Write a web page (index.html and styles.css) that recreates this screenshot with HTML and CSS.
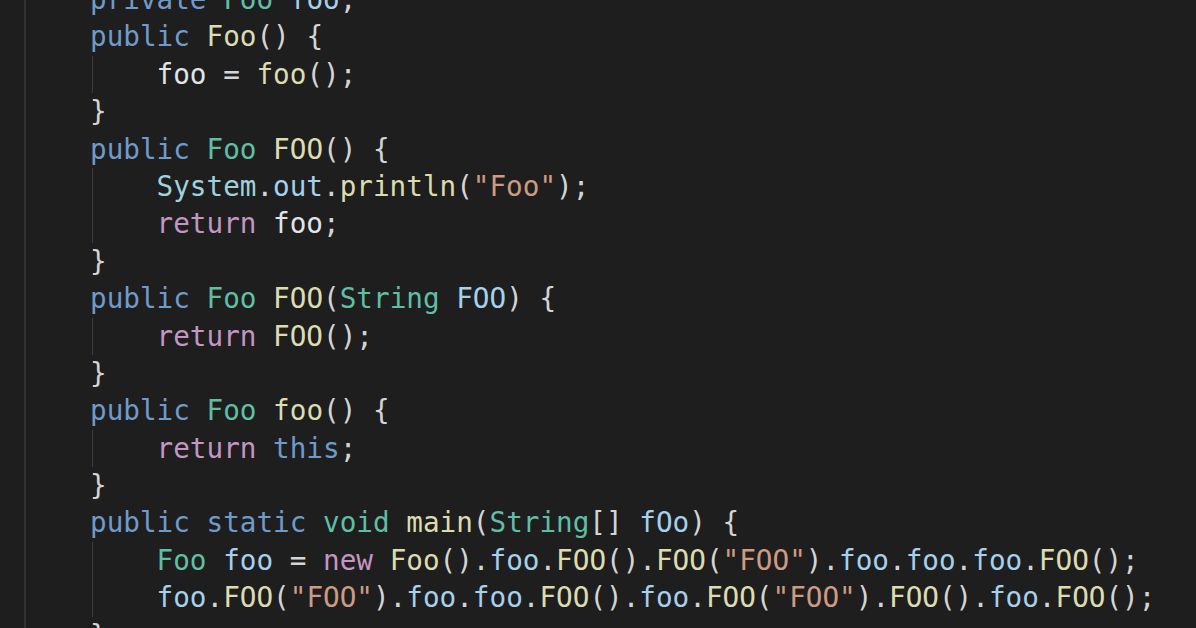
FILE: index.html
```html
<!DOCTYPE html>
<html>
<head>
<meta charset="utf-8">
<link rel="stylesheet" href="styles.css">
</head>
<body>
<div class="editor">
  <div class="rule"></div>
  <div class="code">
    <div class="ln"><span class="kw">private</span> <span class="ty">Foo</span> <span class="var">foo</span>;</div>
    <div class="ln"><span class="kw">public</span> <span class="fn">Foo</span>() {</div>
    <div class="body">
      <div class="ln"><span class="var2">foo</span> = <span class="fn">foo</span>();</div>
    </div>
    <div class="ln">}</div>
    <div class="ln"><span class="kw">public</span> <span class="ty">Foo</span> <span class="fn">FOO</span>() {</div>
    <div class="body">
      <div class="ln"><span class="ty2">System</span>.<span class="var">out</span>.<span class="fn">println</span>(<span class="str">"Foo"</span>);</div>
      <div class="ln"><span class="ctl">return</span> <span class="var2">foo</span>;</div>
    </div>
    <div class="ln">}</div>
    <div class="ln"><span class="kw">public</span> <span class="ty">Foo</span> <span class="fn">FOO</span>(<span class="ty">String</span> <span class="var">FOO</span>) {</div>
    <div class="body">
      <div class="ln"><span class="ctl">return</span> <span class="fn">FOO</span>();</div>
    </div>
    <div class="ln">}</div>
    <div class="ln"><span class="kw">public</span> <span class="ty">Foo</span> <span class="fn">foo</span>() {</div>
    <div class="body">
      <div class="ln"><span class="ctl">return</span> <span class="kw">this</span>;</div>
    </div>
    <div class="ln">}</div>
    <div class="ln"><span class="kw">public</span> <span class="kw">static</span> <span class="ty">void</span> <span class="fn">main</span>(<span class="ty">String</span>[] <span class="var">fOo</span>) {</div>
    <div class="body">
      <div class="ln"><span class="ty">Foo</span> <span class="var">foo</span> = <span class="ctl">new</span> <span class="fn">Foo</span>().<span class="var">foo</span>.<span class="fn">FOO</span>().<span class="fn">FOO</span>(<span class="str">"FOO"</span>).<span class="var">foo</span>.<span class="var">foo</span>.<span class="var">foo</span>.<span class="fn">FOO</span>();</div>
      <div class="ln"><span class="var">foo</span>.<span class="fn">FOO</span>(<span class="str">"FOO"</span>).<span class="var">foo</span>.<span class="var">foo</span>.<span class="fn">FOO</span>().<span class="var">foo</span>.<span class="fn">FOO</span>(<span class="str">"FOO"</span>).<span class="fn">FOO</span>().<span class="var">foo</span>.<span class="fn">FOO</span>();</div>
    </div>
    <div class="ln">}</div>
  </div>
</div>
</body>
</html>
```

FILE: styles.css
```css
html, body {
  margin: 0;
  padding: 0;
  background: #1e1e1e;
  overflow: hidden;
}

.editor {
  display: flex;
  width: 1196px;
  height: 628px;
  overflow: hidden;
  background: #1e1e1e;
}

.rule {
  flex: none;
  width: 2px;
  height: 100%;
  margin-left: 24px;
  background: #333333;
}

.code {
  flex: 1;
  margin-left: 64px;
  margin-top: -19px;
  font-family: "DejaVu Sans Mono", "Liberation Mono", monospace;
  font-size: 27.65px;
  line-height: 37.4px;
  color: #d4d4d4;
}

.ln {
  height: 37.4px;
  white-space: pre;
}

.body {
  margin-left: 2px;
  border-left: 1px solid #3c3c3c;
  padding-left: calc(4ch - 3px);
}

.kw  { color: #6f9bcb; }
.ty  { color: #5fbfa5; }
.ty2 { color: #9fd3dc; }
.fn  { color: #dcdcb0; }
.var { color: #a6d0ec; }
.var2 { color: #e0e4e6; }
.ctl { color: #c596c2; }
.str { color: #cf9a82; }
```
